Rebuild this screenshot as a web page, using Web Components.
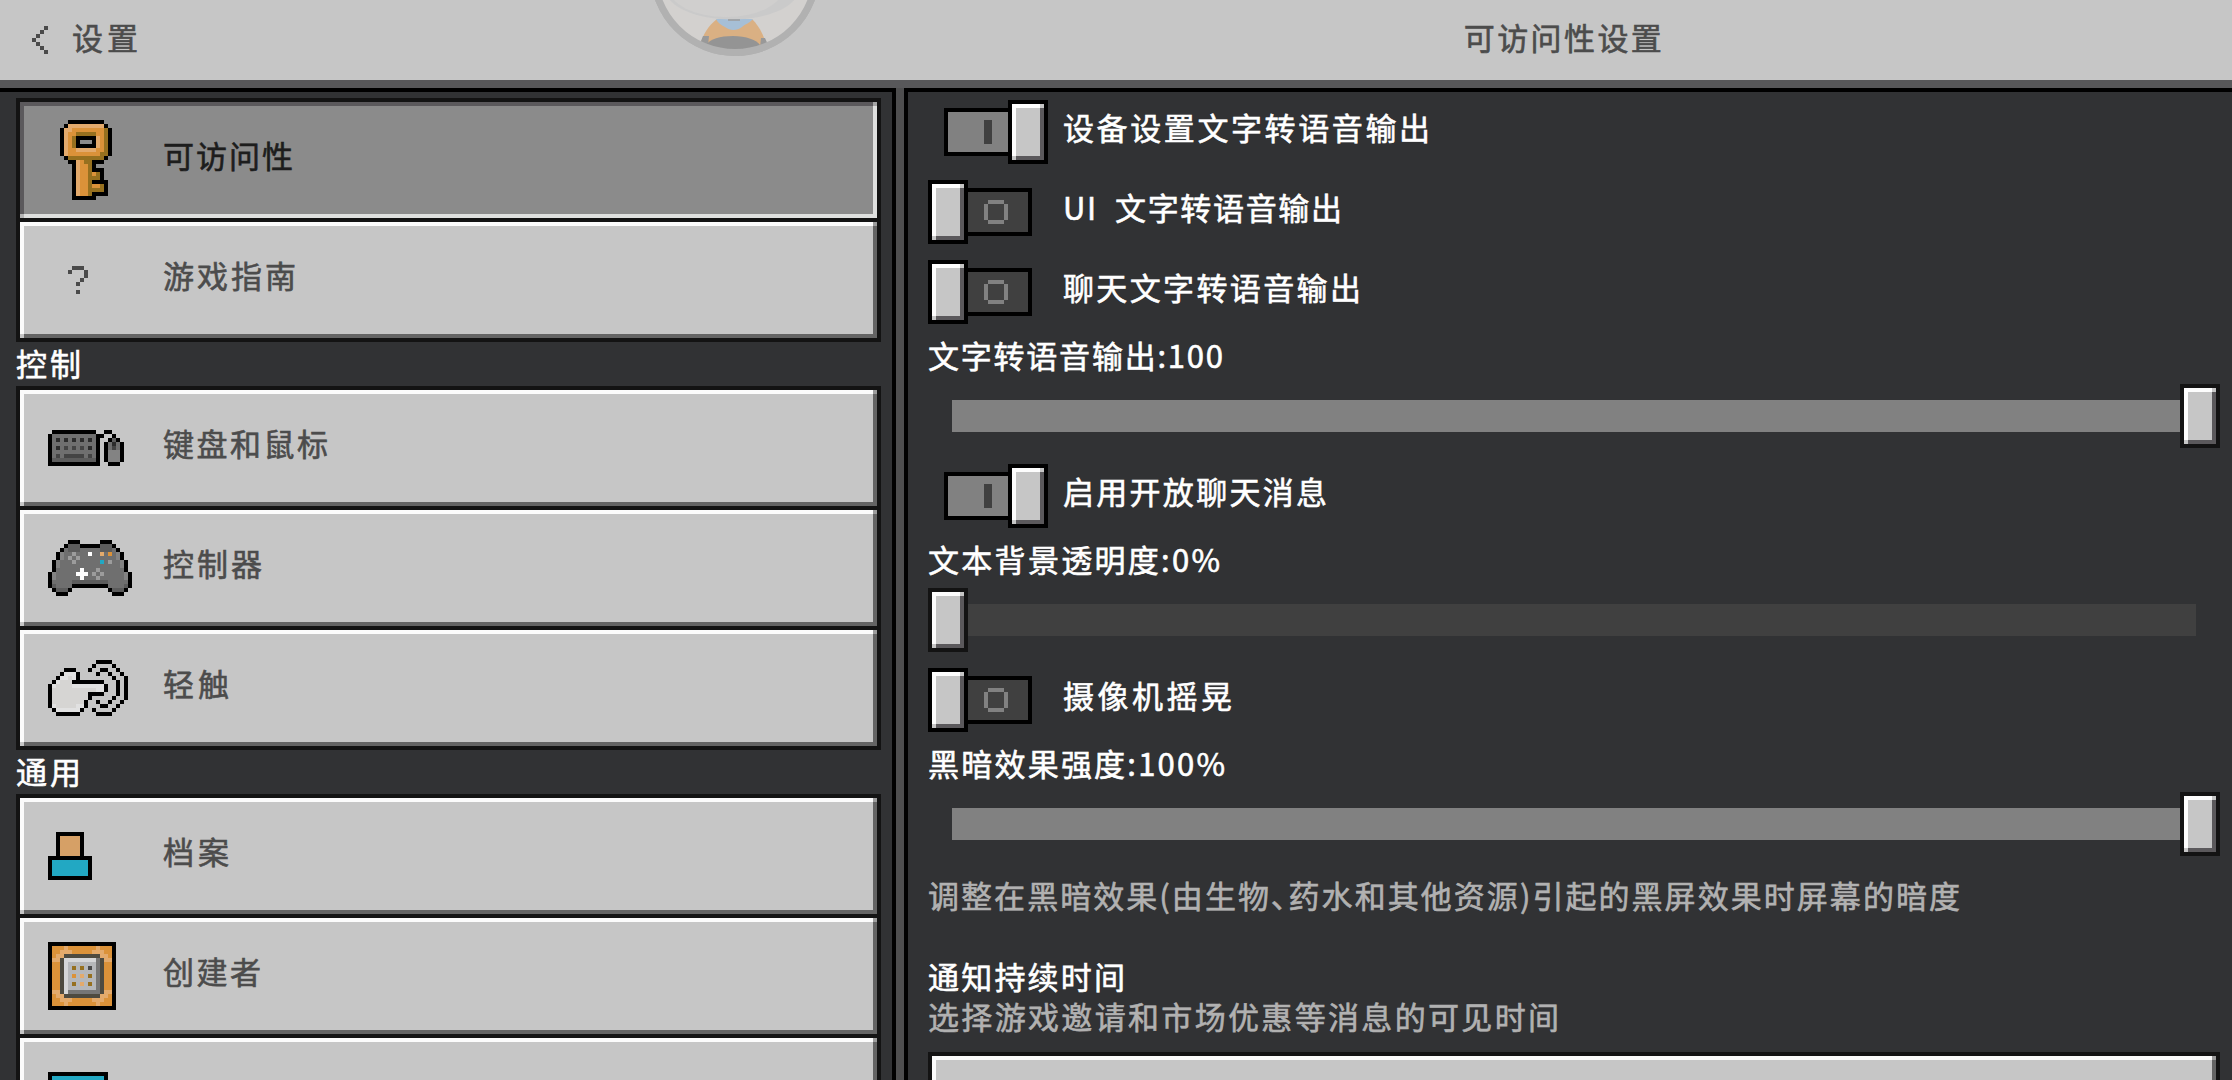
<!DOCTYPE html>
<html lang="zh-CN">
<head>
<meta charset="UTF-8">
<title>设置</title>
<style>
  html, body {
    margin: 0;
    height: 100%;
    overflow: hidden;
    background: #58585a;
  }
  body {
    font-family: "Noto Sans CJK SC", "Noto Sans", sans-serif;
    font-size: 31px;
    line-height: 40px;
  }
</style>
</head>
<body>
<settings-screen></settings-screen>

<script>
// Sprites are drawn on a 4px grid, one character per pixel.
const PALETTE = {
  K: "#000000", L: "#e3aa6c", O: "#db9239", D: "#96701f", q: "#4a4a4a",
  G: "#6f6f6f", g: "#5c5c5c", k: "#2c2c2c", b: "#444444", M: "#838383",
  A: "#9c9c9c", W: "#ffffff", w: "#d6d5d3", H: "#e1e1e1", B: "#22a8c3",
  S: "#d6a066", P: "#b5b7ba", T: "#d5d6d8", N: "#767676", R: "#4d4a40"
};

const SPRITES = {
  back: ["...q", "..q.", ".q..", "q...", ".q..", "..q.", "...q"],
  key: [
    ".....KKKKKKKKK..",
    "....KLLLLLLLLLK.",
    "...KLLOOOOOOOODK",
    "...KLOODDDDDOODK",
    "...KLODKKKKKLODK",
    "...KLODK...KLODK",
    "...KLODKKKKKLODK",
    "...KLOOLLLLLOODK",
    "...KLOOOOOOOODDK",
    "....KDDDDDDDDDK.",
    ".....KKLODDKKK..",
    "......KLOODK....",
    "......KLOODKKK..",
    "......KLOODODK..",
    "......KLOODDDK..",
    "......KLOODKKKK.",
    "......KLOODOODK.",
    "......KLOODDDDK.",
    "......KLOODKKKK.",
    "......KKKKKK...."
  ],
  help: [
    "......qqq.", ".....q...q", ".........q", "........q.",
    ".......q..", "..........", ".......q.."
  ],
  keyboard: [
    ".KKKKKKKKKKK..KK...",
    "KGGGGGGGGGGGKK..K..",
    "KGkGkGkGkGkGK..KgK.",
    "KGGGGGGGGGGGK.KGkGK",
    "KGkGbGbGbGkGK.KGbGK",
    "KGGGGGGGGGGGK.KMMMK",
    "KGbGbbbbbGbGK.KMMMK",
    "KgggggggggggK.KMMMK",
    "KKKKKKKKKKKKK..KKK."
  ],
  controller: [
    ".....KKK.....KKK.....",
    "....KgggKKKKKgggK....",
    "...KGgggGGGGGgggGK...",
    "..KMGGAGGGWGGLGOGMK..",
    "..KMGAGAGGGGGGGGGMK..",
    ".KMGGGAGGGGGGBGAGGMK.",
    ".KMGGGGGGGGGGGGGGGMK.",
    ".KGGGGGGWGGGAGGGGGGK.",
    "KMGGGGGWWWGAGAGGGGGMK",
    "KMGGGGGGWGGGAGGGGGGMK",
    "KGGGGGgggggggggGGGGGK",
    "KgGGGGKKKKKKKKKGGGGgK",
    ".KgggK.........KgggK.",
    "..KKK...........KKK.."
  ],
  touch: [
    "............KKKK....",
    "...........K....K...",
    "....KKK...K..KK..K..",
    "...KHHHK....K..K..K.",
    "..KHHwHK........K..K",
    ".KHwwwKKKKKKKK...K.K",
    "KHwwwwHHHHHHHHK..K.K",
    "KwwwwwwwwwwwHHK..K.K",
    "KwwwwwwwwwKKKK...K.K",
    "KwwwwwwwwwK.....K..K",
    "KwwwwwwwwK..K..K..K.",
    "KHwwwwwHHK...KK..K..",
    ".KHHHHHHK..K....K...",
    "..KKKKKK....KKKK...."
  ],
  profile: [
    "..KKKKKKK..",
    "..KSSSSSK..",
    "..KSSSSSK..",
    "..KSSSSSK..",
    "..KSSSSSK..",
    "..KSSSSSK..",
    "KKKKKKKKKKK",
    "KBBBBBBBBBK",
    "KBBBBBBBBBK",
    "KBBBBBBBBBK",
    "KBBBBBBBBBK",
    "KKKKKKKKKKK"
  ],
  creator: [
    "KKKKKKKKKKKKKKKKK",
    "KOOOLOOOOOOOLOOOK",
    "KOOLLLOOOOOLLLOOK",
    "KOLLRRRRRRRRRLLOK",
    "KLLRTTTTTTTTNRLLK",
    "KOORTPPPPPPPNROOK",
    "KOORTPDPDPqPNROOK",
    "KOORTPPPPPPPNROOK",
    "KOORTPOPLPDPNROOK",
    "KOORTPPPPPPPNROOK",
    "KOORTPDPLPDPNROOK",
    "KOORTPPPPPPPNROOK",
    "KLLRTNNNNNNNNRLLK",
    "KOLLRRRRRRRRRLLOK",
    "KOOLLLOOOOOLLLOOK",
    "KOOOLOOOOOOOLOOOK",
    "KKKKKKKKKKKKKKKKK"
  ],
  display: [
    "KKKKKKKKKKKKKKK",
    "KBBBBBBBBBBBBBK",
    "KBBBBBBBBBBBBBK",
    "KBBBBBBBBBBBBBK",
    "KBBBBBBBBBBBBBK",
    "KBBBBBBBBBBBBBK",
    "KBBBBBBBBBBBBBK",
    "KBBBBBBBBBBBBBK",
    "KKKKKKKKKKKKKKK",
    "......KKK......",
    "......KKK......",
    "....KKKKKKK...."
  ]
};

class PixelIcon extends HTMLElement {
  connectedCallback() {
    const rows = SPRITES[this.getAttribute("name")];
    const width = rows[0].length;
    let rects = "";
    rows.forEach((row, y) => {
      let x = 0;
      while (x < width) {
        let end = x + 1;
        while (end < width && row[end] === row[x]) end++;
        if (row[x] !== ".") {
          rects += `<rect x="${x}" y="${y}" width="${end - x}" height="1" fill="${PALETTE[row[x]]}"/>`;
        }
        x = end;
      }
    });
    this.attachShadow({ mode: "open" }).innerHTML = `
      <style>
        :host { display: block; flex: none; }
        svg { display: block; }
      </style>
      <svg width="${width * 4}" height="${rows.length * 4}" viewBox="0 0 ${width} ${rows.length}" shape-rendering="crispEdges">${rects}</svg>
    `;
  }
}

// One line of text, tracked out so that it spans `fit` pixels.
class GameText extends HTMLElement {
  connectedCallback() {
    this.attachShadow({ mode: "open" }).innerHTML = `
      <style>
        :host {
          display: block;
          font-feature-settings: "palt";
          -webkit-text-stroke: 0.6px currentColor;
        }
        span { display: block; width: max-content; white-space: pre; }
      </style>
      <span><slot></slot></span>
    `;
    const fit = Number(this.getAttribute("fit"));
    const span = this.shadowRoot.querySelector("span");
    if (fit) {
      const natural = span.getBoundingClientRect().width;
      const gaps = this.textContent.length - 1;
      span.style.letterSpacing = `${((fit + 1 - natural) / gaps).toFixed(3)}px`;
    }
  }
}

class PlayerAvatar extends HTMLElement {
  connectedCallback() {
    this.attachShadow({ mode: "open" }).innerHTML = `
      <style>
        :host { display: block; }
        svg { display: block; }
      </style>
      <svg width="170" height="60" viewBox="0 0 170 60">
        <defs><clipPath id="disc"><circle cx="85" cy="-29" r="80"/></clipPath></defs>
        <circle cx="85" cy="-29" r="82" fill="#d3d1cf" stroke="#b1b1b1" stroke-width="6"/>
        <g clip-path="url(#disc)">
          <path d="M50 46C53 34 58 26 67 19H102C108 25 114 34 117 48H50z" fill="#dab083"/>
          <path d="M53 36h6l-1 10h-9zM111 38h4l4 9h-9z" fill="#999"/>
          <path d="M66 19h37c-3 4-8 5-11 8c-5 4-12 4-17 0c-4-2-7-4-9-8z" fill="#a6bfd6"/>
          <path d="M56 45C60 39 70 36 83 36s24 4 27 9v12H56z" fill="#949494"/>
          <ellipse cx="82" cy="-10" rx="66" ry="29.500" fill="#cacaca"/>
          <ellipse cx="76" cy="-13" rx="58" ry="30" fill="#d0cfce"/>
          <path d="M78 20h12" stroke="#9b9b9b" stroke-width="1.500"/>
        </g>
        <circle cx="85" cy="-29" r="81.500" fill="none" stroke="#b1b1b1" stroke-width="7"/>
      </svg>
    `;
  }
}

class TopBar extends HTMLElement {
  connectedCallback() {
    this.attachShadow({ mode: "open" }).innerHTML = `
      <style>
        :host {
          display: flex;
          height: 80px;
          background: #c6c6c6;
          color: #4c4c4c;
          position: relative;
        }
        .side { box-sizing: border-box; width: 896px; display: flex; align-items: center; padding-left: 32px; gap: 24px; }
        .title { flex: 1; display: flex; justify-content: center; align-items: center; }
        game-text { padding-bottom: 6px; }
        player-avatar { position: absolute; left: 650px; top: 0; }
      </style>
      <div class="side">
        <pixel-icon name="back"></pixel-icon>
        <game-text fit="65">设置</game-text>
      </div>
      <div class="title"><game-text fit="197">可访问性设置</game-text></div>
      <player-avatar></player-avatar>
    `;
  }
}

class NavItem extends HTMLElement {
  connectedCallback() {
    this.attachShadow({ mode: "open" }).innerHTML = `
      <style>
        :host {
          display: flex;
          align-items: center;
          box-sizing: border-box;
          height: 116px;
          padding-left: 28px;
          background:
            linear-gradient(#c6c6c6, #c6c6c6) 0 100% / 4px 4px no-repeat,
            linear-gradient(#9c9c9c, #9c9c9c) 100% 0 / 4px 4px no-repeat,
            linear-gradient(#646464, #646464) 0 100% / 100% 4px no-repeat,
            linear-gradient(#646464, #646464) 100% 0 / 4px 100% no-repeat,
            linear-gradient(#fbfbfb, #fbfbfb) 0 0 / 100% 4px no-repeat,
            linear-gradient(#fbfbfb, #fbfbfb) 0 0 / 4px 100% no-repeat,
            #c6c6c6;
          color: #4c4c4c;
        }
        :host([selected]) {
          background:
            linear-gradient(#b5b5b5, #b5b5b5) 0 100% / 4px 4px no-repeat,
            linear-gradient(#a5a5a5, #a5a5a5) 100% 0 / 4px 4px no-repeat,
            linear-gradient(#dfe0df, #dfe0df) 0 100% / 100% 4px no-repeat,
            linear-gradient(#dfe0df, #dfe0df) 100% 0 / 4px 100% no-repeat,
            linear-gradient(#5b595c, #5b595c) 0 0 / 100% 4px no-repeat,
            linear-gradient(#5b595c, #5b595c) 0 0 / 4px 100% no-repeat,
            #8b8b8b;
          color: #1d1d1d;
        }
        .icon { width: 115px; flex: none; }
        game-text { padding-bottom: 10px; }
      </style>
      <div class="icon"><pixel-icon name="${this.getAttribute("icon")}"></pixel-icon></div>
      <game-text fit="${this.getAttribute("fit") || 0}">${this.getAttribute("label") || ""}</game-text>
    `;
  }
}

class NavGroup extends HTMLElement {
  connectedCallback() {
    this.attachShadow({ mode: "open" }).innerHTML = `
      <style>
        :host {
          display: flex;
          flex-direction: column;
          gap: 4px;
          padding: 4px;
          background: #131313;
        }
      </style>
      <slot></slot>
    `;
  }
}

// Raised grey knob shared by the switches and the sliders.
class GameHandle extends HTMLElement {
  connectedCallback() {
    this.attachShadow({ mode: "open" }).innerHTML = `
      <style>
        :host {
          display: block;
          box-sizing: border-box;
          width: 40px;
          height: 64px;
          flex: none;
          border: 4px solid var(--edge, #000);
          background:
            linear-gradient(#c6c6c6, #c6c6c6) 0 100% / 4px 4px no-repeat,
            linear-gradient(#c6c6c6, #c6c6c6) 100% 0 / 4px 4px no-repeat,
            linear-gradient(#5b595c, #5b595c) 0 100% / 100% 4px no-repeat,
            linear-gradient(#5b595c, #5b595c) 100% 0 / 4px 100% no-repeat,
            linear-gradient(#fdfdfd, #fdfdfd) 0 0 / 100% 4px no-repeat,
            linear-gradient(#fdfdfd, #fdfdfd) 0 0 / 4px 100% no-repeat,
            #c6c6c6;
        }
      </style>
    `;
  }
}

class GameToggle extends HTMLElement {
  connectedCallback() {
    const on = this.hasAttribute("on");
    const mark = on
      ? `<svg width="8" height="24"><path d="M0 0h8v24H0z" fill="#404040"/></svg>`
      : `<svg width="24" height="24" shape-rendering="crispEdges"><path d="M4 0h16v4H4zM0 4h4v16H0zM20 4h4v16h-4zM4 20h16v4H4z" fill="#818181"/></svg>`;
    const track = `<div class="track">${mark}</div>`;
    const knob = "<game-handle></game-handle>";
    this.attachShadow({ mode: "open" }).innerHTML = `
      <style>
        :host { display: flex; align-items: center; height: 80px; color: #fff; }
        .switch { width: 135px; display: flex; align-items: center; }
        .track {
          box-sizing: border-box;
          flex: none;
          width: 64px;
          height: 48px;
          display: flex;
          align-items: center;
          border: 4px solid #000;
          border-left: 0;
          padding-left: 16px;
          background: #404040;
        }
        :host([on]) .switch { box-sizing: border-box; padding-left: 16px; }
        :host([on]) .track {
          border-left: 4px solid #000;
          border-right: 0;
          padding-left: 36px;
          background: #818181;
        }
        game-text { padding-bottom: 10px; }
      </style>
      <div class="switch">${on ? track + knob : knob + track}</div>
      <game-text fit="${this.getAttribute("fit")}">${this.getAttribute("label")}</game-text>
    `;
  }
}

class GameSlider extends HTMLElement {
  connectedCallback() {
    const full = this.getAttribute("value") === "100";
    this.attachShadow({ mode: "open" }).innerHTML = `
      <style>
        :host { display: block; height: 124px; color: #fff; }
        game-text { box-sizing: border-box; height: 44px; padding-top: 3px; }
        .row { height: 80px; display: flex; align-items: center; --edge: #131313; }
        .bar { flex: 1; height: 32px; background: ${full ? "#818181" : "#404040"}; ${full ? "margin-left: 24px" : "margin-right: 24px"}; }
      </style>
      <game-text fit="${this.getAttribute("fit")}">${this.getAttribute("label")}</game-text>
      <div class="row">
        ${full ? `<div class="bar"></div><game-handle></game-handle>` : `<game-handle></game-handle><div class="bar"></div>`}
      </div>
    `;
  }
}

class SettingsScreen extends HTMLElement {
  connectedCallback() {
    this.attachShadow({ mode: "open" }).innerHTML = `
      <style>
        :host { display: flex; flex-direction: column; width: 2232px; height: 1080px; overflow: hidden; }
        main { flex: 1; min-height: 0; display: flex; gap: 8px; padding-top: 8px; background: linear-gradient(#58585a 8px, #4e4e4f 8px); }
        section { box-sizing: border-box; background: #313234; border-top: 4px solid #000; overflow: hidden; color: #fff; }
        .nav { width: 896px; border-right: 4px solid #000; padding: 6px 11px 0 16px; }
        .nav > game-text { box-sizing: border-box; height: 44px; padding-top: 1px; }
        .options { flex: 1; border-left: 4px solid #000; padding: 0 12px 0 20px; }
        .hint { color: #b1b1b1; }
        .description { padding: 11px 0 41px; height: 40px; }
        .dropdown { margin-top: 16px; border: 4px solid #131313; }
      </style>
      <top-bar></top-bar>
      <main>
        <section class="nav">
          <nav-group>
            <nav-item selected icon="key" label="可访问性" fit="129"></nav-item>
            <nav-item icon="help" label="游戏指南" fit="132"></nav-item>
          </nav-group>
          <game-text fit="64">控制</game-text>
          <nav-group>
            <nav-item icon="keyboard" label="键盘和鼠标" fit="164"></nav-item>
            <nav-item icon="controller" label="控制器" fit="98"></nav-item>
            <nav-item icon="touch" label="轻触" fit="65"></nav-item>
          </nav-group>
          <game-text fit="64">通用</game-text>
          <nav-group>
            <nav-item icon="profile" label="档案" fit="65"></nav-item>
            <nav-item icon="creator" label="创建者" fit="97"></nav-item>
            <nav-item icon="display"></nav-item>
          </nav-group>
        </section>
        <section class="options">
          <game-toggle on label="设备设置文字转语音输出" fit="366"></game-toggle>
          <game-toggle label="UI  文字转语音输出" fit="278"></game-toggle>
          <game-toggle label="聊天文字转语音输出" fit="297"></game-toggle>
          <game-slider label="文字转语音输出:100" value="100" fit="294"></game-slider>
          <game-toggle on label="启用开放聊天消息" fit="263"></game-toggle>
          <game-slider label="文本背景透明度:0%" value="0" fit="291"></game-slider>
          <game-toggle label="摄像机摇晃" fit="168"></game-toggle>
          <game-slider label="黑暗效果强度:100%" value="100" fit="296"></game-slider>
          <game-text class="hint description" fit="1031">调整在黑暗效果(由生物、药水和其他资源)引起的黑屏效果时屏幕的暗度</game-text>
          <game-text fit="196">通知持续时间</game-text>
          <game-text class="hint" fit="630">选择游戏邀请和市场优惠等消息的可见时间</game-text>
          <div class="dropdown"><nav-item icon="help"></nav-item></div>
        </section>
      </main>
    `;
  }
}

customElements.define("pixel-icon", PixelIcon);
customElements.define("game-text", GameText);
customElements.define("player-avatar", PlayerAvatar);
customElements.define("top-bar", TopBar);
customElements.define("nav-item", NavItem);
customElements.define("nav-group", NavGroup);
customElements.define("game-handle", GameHandle);
customElements.define("game-toggle", GameToggle);
customElements.define("game-slider", GameSlider);
customElements.define("settings-screen", SettingsScreen);
</script>
</body>
</html>
